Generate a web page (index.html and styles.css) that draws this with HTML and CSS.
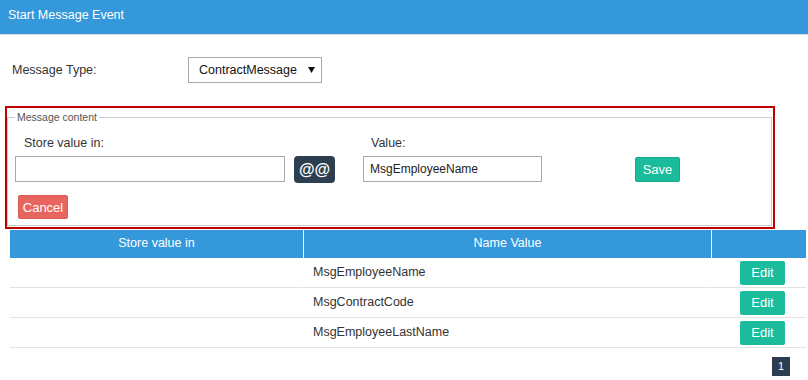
FILE: index.html
```html
<!DOCTYPE html>
<html>
<head>
<meta charset="utf-8">
<link rel="stylesheet" href="styles.css">
</head>
<body>
<div class="header">Start Message Event</div>
<div class="type-row">
  <span class="type-label">Message Type:</span>
  <div class="select"><span>ContractMessage</span><svg class="arrow" width="7" height="6" viewBox="0 0 7 6"><polygon points="0,0 7,0 3.5,6" fill="#111"/></svg></div>
</div>
<div class="redbox">
  <fieldset class="content">
    <legend>Message content</legend>
    <div class="label-row">
      <span class="lbl lbl-store">Store value in:</span>
      <span class="lbl lbl-value">Value:</span>
    </div>
    <div class="input-row">
      <div class="input input-store"></div>
      <button class="btn-at">@@</button>
      <div class="input input-value">MsgEmployeeName</div>
      <button class="btn btn-save">Save</button>
    </div>
    <div class="cancel-row">
      <button class="btn btn-cancel">Cancel</button>
    </div>
  </fieldset>
</div>
<table class="grid">
  <colgroup><col class="c1"><col class="c2"><col class="c3"></colgroup>
  <thead>
    <tr><th>Store value in</th><th>Name Value</th><th></th></tr>
  </thead>
  <tbody>
    <tr><td></td><td class="name">MsgEmployeeName</td><td class="act"><button class="btn btn-edit">Edit</button></td></tr>
    <tr><td></td><td class="name">MsgContractCode</td><td class="act"><button class="btn btn-edit">Edit</button></td></tr>
    <tr><td></td><td class="name">MsgEmployeeLastName</td><td class="act"><button class="btn btn-edit">Edit</button></td></tr>
  </tbody>
</table>
<div class="pager"><span class="page">1</span></div>
</body>
</html>
```
FILE: styles.css
```css
* { box-sizing: border-box; }
body {
  margin: 0;
  font-family: "Liberation Sans", Arial, sans-serif;
  font-size: 12.5px;
  color: #333;
  background: #fff;
}
.header {
  height: 35px;
  background: #3498db;
  border-bottom: 1px solid #dcdcdc;
  color: #fff;
  font-size: 12.5px;
  padding: 7px 0 0 8px;
  line-height: 16px;
}
.type-row {
  display: flex;
  align-items: center;
  margin-top: 22px;
  padding-left: 12px;
}
.type-label { width: 176px; }
.select {
  width: 134px;
  height: 26px;
  border: 1px solid #a9a9a9;
  display: flex;
  align-items: center;
  justify-content: space-between;
  padding: 0 6px 0 10px;
  color: #111;
}
.arrow { display: block; }
.redbox {
  margin: 23px 0 0 5px;
  width: 770px;
  border: 2px solid #bf0000;
  padding: 3px 1px 1px 0;
}
.content {
  margin: 0;
  border: 1px solid #cccccc;
  padding: 11px 7px 6px 7px;
  min-width: 0;
}
.content legend {
  font-size: 10.5px;
  line-height: 13px;
  color: #555;
  padding: 0 2px;
  margin-left: 0;
}
.label-row {
  display: flex;
  line-height: 16px;
  margin-bottom: 5px;
}
.lbl-store { padding-left: 9px; width: 348px; }
.lbl-value { padding-left: 8px; }
.input-row {
  display: flex;
  align-items: flex-start;
}
.input {
  height: 26px;
  border: 1px solid #a9a9a9;
  background: #fff;
  padding: 0 6px;
  line-height: 24px;
  font-size: 12px;
  color: #222;
}
.input-store { width: 270px; }
.input-value { width: 179px; margin-left: 28px; }
.btn-at {
  width: 41px;
  height: 27px;
  margin-left: 9px;
  border: 0;
  border-radius: 4px;
  background: #2c3e50;
  color: #fff;
  font-family: "Liberation Sans", Arial, sans-serif;
  font-size: 16px;
  font-weight: bold;
  padding: 0;
}
.btn {
  font-family: "Liberation Sans", Arial, sans-serif;
  font-size: 13px;
  color: #fff;
  padding: 0;
  border-radius: 2px;
  cursor: pointer;
}
.btn-save {
  width: 45px;
  height: 25px;
  margin: 1px 0 0 93px;
  background: #1abc9c;
  border: 1px solid #18a98c;
}
.cancel-row { margin-top: 12px; padding-left: 3px; }
.btn-cancel {
  width: 50px;
  height: 24px;
  background: #e8645e;
  border: 1px solid #dc5a54;
}
.grid {
  margin: 1px 0 0 10px;
  width: 796px;
  table-layout: fixed;
  border-collapse: separate;
  border-spacing: 0;
}
.c1 { width: 293px; }
.c2 { width: 408px; }
.c3 { width: 95px; }
.grid th {
  height: 28px;
  background: #3498db;
  color: #fff;
  font-weight: normal;
  font-size: 12.5px;
  text-align: center;
  padding: 0 0 2px 0;
}
.grid th + th, .grid td + td { border-left: 1px solid #fff; }
.grid td {
  height: 30px;
  border-bottom: 1px solid #e2e2e2;
  padding: 0;
  vertical-align: middle;
}
.grid td.name { padding-left: 9px; padding-bottom: 2px; }
.grid td.act { padding-left: 28px; }
.btn-edit {
  display: block;
  width: 45px;
  height: 24px;
  background: #1abc9c;
  border: 0;
}
.pager {
  display: flex;
  justify-content: flex-end;
  padding-right: 18px;
  margin-top: 9px;
}
.page {
  width: 18px;
  height: 19px;
  background: #2c3e50;
  color: #fff;
  font-size: 11px;
  line-height: 19px;
  text-align: center;
}
```
